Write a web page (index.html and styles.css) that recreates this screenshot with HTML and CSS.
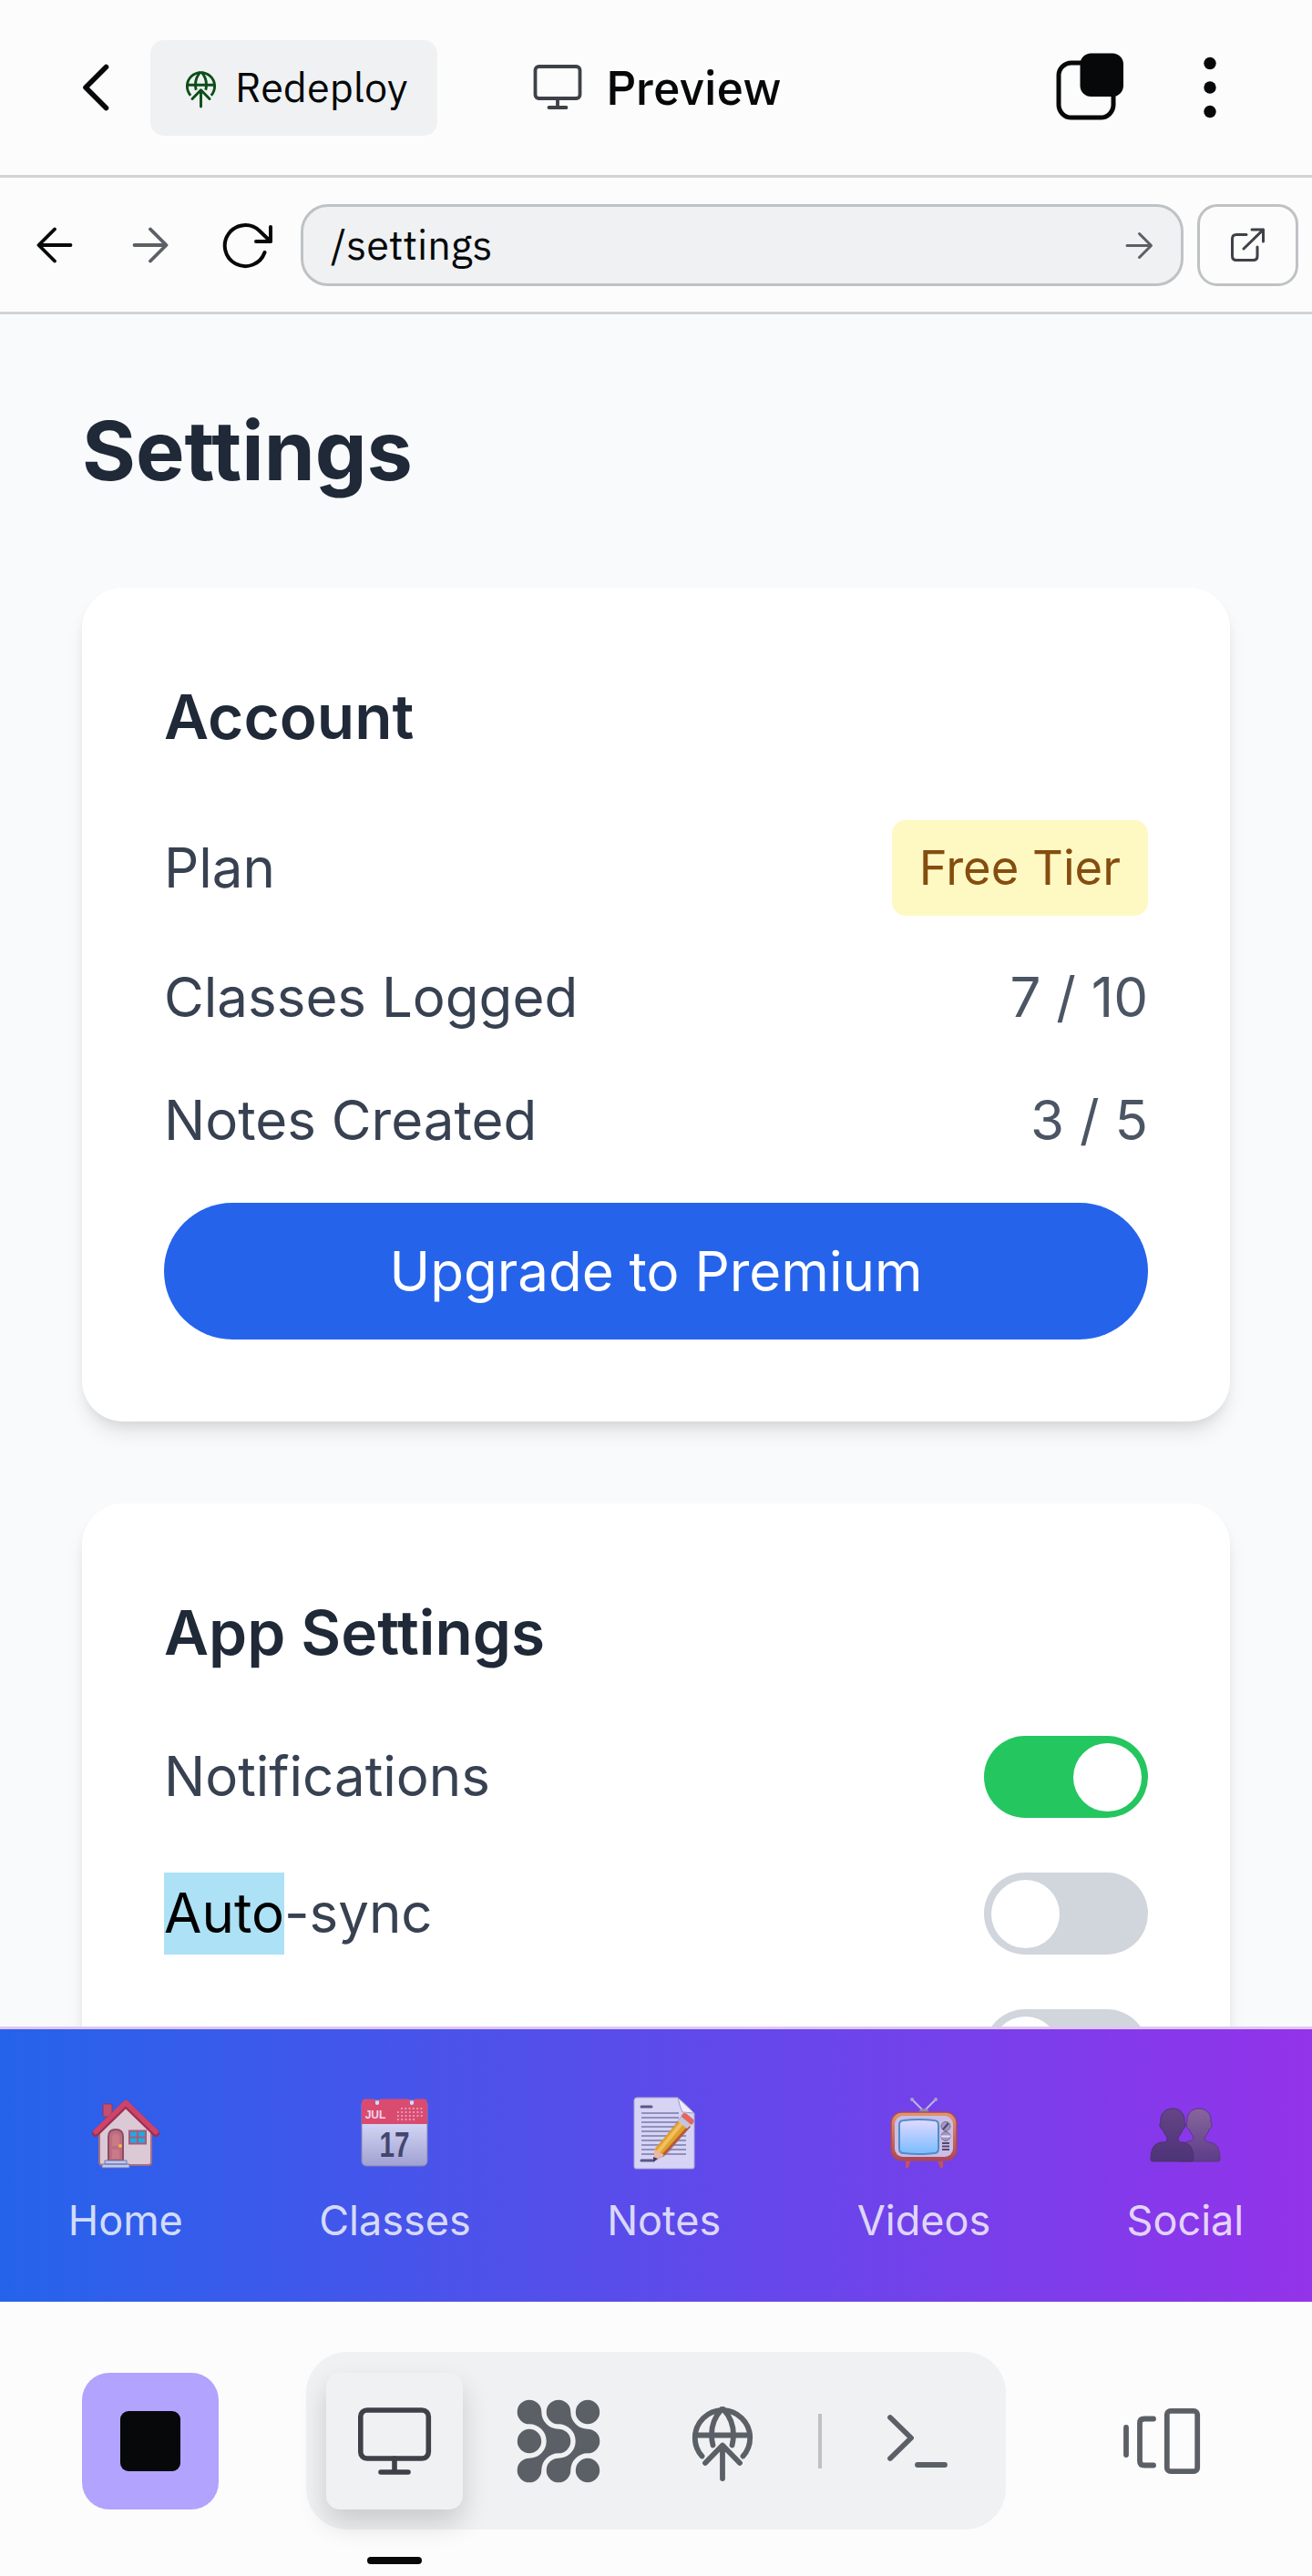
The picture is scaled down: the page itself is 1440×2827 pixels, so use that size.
FILE: index.html
```html
<!DOCTYPE html>
<html lang="en">
<head>
<meta charset="utf-8">
<title>Settings</title>
<link rel="stylesheet" href="styles.css">
</head>
<body>
<svg class="defs" width="0" height="0" aria-hidden="true">
  <symbol id="deploy" viewBox="0 0 90 90">
    <g fill="none" stroke="currentColor" stroke-width="5.8">
      <path d="M22.500 61.500A30.200 30.200 0 1 1 67.500 61.500"/>
      <path d="M15 38.500H75M44 10Q33 22 33 38 33 44 34.500 49.500M46 10Q57 22 57 38 57 44 55.500 49.500"/>
      <path d="M45 86V50M26 69 45 49.500 64 69" stroke-linecap="round" stroke-linejoin="round"/>
    </g>
  </symbol>
  <symbol id="monitor" viewBox="0 0 90 90">
    <g fill="none" stroke="currentColor" stroke-width="5.6" stroke-linecap="round">
      <rect x="7.800" y="11" width="74.500" height="53" rx="7"/>
      <path d="M45 64V79M30 79H60"/>
    </g>
  </symbol>
</svg>
<div class="app">
  <header class="topbar">
    <svg class="back" viewBox="0 0 75 90"><path d="M48.500 22.500 26 45 48.500 67.500"/></svg>
    <button class="redeploy"><svg class="redeploy-icon"><use href="#deploy"/></svg><span>Redeploy</span></button>
    <div class="preview"><svg class="preview-icon" viewBox="0 0 60 60"><rect x="5.500" y="7" width="49" height="35" rx="4"/><path d="M30 42V52M20.500 52H39.500"/></svg><span>Preview</span></div>
    <svg class="layers" viewBox="0 0 90 90"><rect x="11" y="18" width="60" height="60" rx="14"/><rect class="solid" x="34.500" y="7.500" width="47.500" height="47.500" rx="12"/></svg>
    <svg class="dots" viewBox="0 0 60 90"><circle cx="30" cy="18.500" r="6.700"/><circle cx="30" cy="45" r="6.700"/><circle cx="30" cy="71.500" r="6.700"/></svg>
  </header>
  <div class="addressbar">
    <svg class="nav-arrow" viewBox="0 0 60 60"><path d="M47.500 30H13M30 12.500 12.500 30 30 47.500"/></svg>
    <svg class="nav-arrow muted" viewBox="0 0 60 60"><path d="M12.500 30H47M30 12.500 47.500 30 30 47.500"/></svg>
    <svg class="reload" viewBox="0 0 75 75"><path d="M59.500 45A22.500 22.500 0 1 1 54 21.500L66 33M66 17V33H50"/></svg>
    <div class="url"><span>/settings</span><svg viewBox="0 0 45 45"><path d="M9 22.500H35M22.500 9.500 35.500 22.500 22.500 35.500"/></svg></div>
    <button class="external"><svg viewBox="0 0 45 45"><path d="M21 10.500H10Q5.500 10.500 5.500 15V34Q5.500 38.500 10 38.500H28.500Q33 38.500 33 34V24M18 26 39.500 5M27 5H39.500V18"/></svg></button>
  </div>
  <main class="page">
    <h1>Settings</h1>
    <section class="card account">
      <h2>Account</h2>
      <div class="row"><span class="label">Plan</span><span class="badge">Free Tier</span></div>
      <div class="row"><span class="label">Classes Logged</span><span class="label value">7 / 10</span></div>
      <div class="row"><span class="label">Notes Created</span><span class="label value">3 / 5</span></div>
      <button class="upgrade">Upgrade to Premium</button>
    </section>
    <section class="card app-settings">
      <h2>App Settings</h2>
      <div class="row"><span class="label">Notifications</span><span class="toggle on"></span></div>
      <div class="row"><span class="label"><mark>Auto</mark>-sync</span><span class="toggle"></span></div>
      <div class="row"><span></span><span class="toggle"></span></div>
    </section>
  </main>
  <nav class="tabs">
    <a class="tab">
      <svg viewBox="0 0 90 90">
        <path d="M20 14h10v14H20z" fill="#c54f70" stroke="#873b63"/>
        <path d="M45 14 73 43V78Q73 81 70 81H19Q16 81 16 78V43Z" fill="#dbc9d5" stroke="#a86e83" stroke-width="2"/>
        <path d="M12 46 45 14 78 46" fill="none" stroke="#9c2e56" stroke-width="8" stroke-linecap="round" stroke-linejoin="round"/>
        <path d="M12 44.500 45 12.500 78 44.500" fill="none" stroke="#cf4367" stroke-width="5.500" stroke-linecap="round" stroke-linejoin="round"/>
        <path d="M26 76V50Q26 42 34 42T42 50V76Z" fill="#bd6d80" stroke="#8c4c65" stroke-width="2"/>
        <path d="M30 60V51Q30 47 34 47T38 51V60ZM30 64H38V74H30Z" fill="#c97a87"/>
        <circle cx="39" cy="60" r="2" fill="#edba45"/>
        <rect x="49" y="43.500" width="18" height="14" fill="#20aae3" stroke="#a85a78" stroke-width="2"/>
        <path d="M58 43V57M49 50.500H67" stroke="#a85a78" stroke-width="2"/>
        <path d="M22 76H46V80H22ZM19 80H49V84H19Z" fill="#bdc7ef" stroke="#7176a6"/>
      </svg><span>Home</span>
    </a>
    <a class="tab">
      <svg viewBox="0 0 90 90">
        <defs><linearGradient id="cal" x1="0" y1="0" x2="0" y2="1"><stop offset=".3" stop-color="#d7daf7"/><stop offset="1" stop-color="#a0a1d2"/></linearGradient></defs>
        <rect x="9" y="10" width="72" height="72" rx="5" fill="url(#cal)" stroke="#8586b5"/>
        <path d="M9 36V13Q9 8.500 13 8.500H22Q24 8.500 24 11V14Q26 16 28 14V11Q28 8.500 30 8.500H60Q62 8.500 62 11V14Q64 16 66 14V11Q66 8.500 68 8.500H77Q81 8.500 81 13V36Z" fill="#d94c70"/>
        <path d="M52 19H76M48 23H76M48 27H76M48 31H68" stroke="#eeb8d2" stroke-width="1.600" stroke-dasharray="1.800 2.500"/>
        <text class="cal-month" x="24" y="30" text-anchor="middle">JUL</text>
        <text class="cal-day" x="45" y="72" text-anchor="middle" textLength="33" lengthAdjust="spacingAndGlyphs">17</text>
      </svg><span>Classes</span>
    </a>
    <a class="tab">
      <svg viewBox="0 0 90 90">
        <path d="M15 7H60L78 24V83Q78 85 76 85H14Q12 85 12 83V10Q12 7 15 7Z" fill="#d6d3f5" stroke="#a9a6d3"/>
        <path d="M60 7Q62 17 65 23L78 24Z" fill="#efeaff" stroke="#9998c1"/>
        <path d="M20 17H31M20 76H32" stroke="#57598b" stroke-width="3" stroke-linecap="round"/>
        <path d="M20 24H61M20 29H61M20 34H63M20 39H69M20 44H69M20 49H69M20 54H69M20 59H69M20 64H69M20 69H69" stroke="#797ba9" stroke-width="1.700"/>
        <path d="M34 77 37 63 65 25 77 32 50 68Z" fill="#61486d" opacity=".28"/>
        <path d="M34 76 34 64 62 31 73 38 44 71Z" fill="#e0a12e"/>
        <path d="M37 68 66 33" stroke="#f2bf61" stroke-width="4"/>
        <path d="M43 71 73 38" stroke="#b75938" stroke-width="3"/>
        <path d="M34 76V64L45 70Z" fill="#eab8aa"/><path d="M33 78V72L38 74Z" fill="#463d59"/>
        <path d="M60 33 64 28 75 36 70 41Z" fill="#c6c4dc"/>
        <path d="M64 28Q65 22 70 25L77 31Q79 33 75 37Z" fill="#e3675c"/>
      </svg><span>Notes</span>
    </a>
    <a class="tab">
      <svg viewBox="0 0 90 90">
        <defs><linearGradient id="tvcase" x1="0" y1="0" x2="0" y2="1"><stop stop-color="#e79569"/><stop offset="1" stop-color="#ae4655"/></linearGradient><linearGradient id="screen" x1="0" y1="0" x2="0" y2="1"><stop stop-color="#e2daff"/><stop offset="1" stop-color="#78bcff"/></linearGradient></defs>
        <path d="M32 9 45 22 58 9" fill="none" stroke="#beb6df" stroke-width="2"/>
        <circle cx="32" cy="9" r="2" fill="#a99fca"/><circle cx="58" cy="9" r="2" fill="#a99fca"/>
        <path d="M39 24Q40 19 45 19T51 24Z" fill="#8f87b6"/>
        <path d="M25 75H31L28 84H25ZM60 75H66L66 84H63Z" fill="#c55261"/>
        <rect x="9" y="23" width="72" height="53" rx="12" fill="url(#tvcase)" stroke="#a34b65" stroke-width="1.500"/>
        <rect x="13" y="27" width="64" height="45" rx="9" fill="#c9bfe7"/>
        <path d="M23 32Q39 30 56 32 61 32 61 37V63Q61 68 56 68 39 70 23 68 18 68 18 63V37Q18 32 23 32Z" fill="url(#screen)" stroke="#508cc8" stroke-width="2"/>
        <circle cx="69" cy="38.500" r="5" fill="#a19abe" stroke="#756b98"/><path d="M66 42 72 35" stroke="#4d476e" stroke-width="2"/>
        <circle cx="69" cy="49.500" r="5" fill="#a19abe" stroke="#756b98"/><path d="M64 49.500H74" stroke="#e7dfff" stroke-width="2"/>
        <path d="M65 57H73M65 60.500H73M65 64H73" stroke="#55466d" stroke-width="2"/>
      </svg><span>Videos</span>
    </a>
    <a class="tab">
      <svg viewBox="0 0 90 90">
        <defs><linearGradient id="p1" x1="0" y1="0" x2="0" y2="1"><stop stop-color="#654586"/><stop offset="1" stop-color="#4c3377"/></linearGradient><linearGradient id="p2" x1="0" y1="0" x2="0" y2="1"><stop stop-color="#87669d"/><stop offset="1" stop-color="#5d3c89"/></linearGradient></defs>
        <path d="M60 19C51 19 46 26 47 34 45 36 47 41 49 42 51 47 54 49 54 52 54 56 40 54 38 63Q36 69 37 75Q37 77 39 77H81Q83 77 83 75C83 61 79 57 71 56 67 55 66 54 66 51 68 48 70 46 71 42 74 41 75 36 73 34 74 26 69 19 60 19Z" fill="url(#p2)" stroke="#5a397c"/>
        <path d="M31 19C22 19 17 26 18 34 16 36 17 41 20 42 22 47 25 49 25 52 25 55 23 56 19 56 11 57 7 62 7 75Q7 77 9 77H52Q54 77 54 75C54 62 50 57 42 56 38 56 37 54 37 51 39 48 41 46 42 42 45 41 46 36 44 34 45 26 40 19 31 19Z" fill="url(#p1)" stroke="#4d326e"/>
      </svg><span>Social</span>
    </a>
  </nav>
  <footer class="toolbar">
    <button class="stop"><i></i></button>
    <div class="tools">
      <button class="tool active"><svg><use href="#monitor"/></svg></button>
      <button class="tool"><svg viewBox="-45 -45 90 90">
        <g fill="currentColor">
          <path id="chain" d="M-32-18.700A18.700 18.700 0 0 1-32 18.700A13.300 13.300 0 1 0-18.700 32A18.700 18.700 0 0 1 0 13.300A13.300 13.300 0 0 0 0-13.300A18.700 18.700 0 0 1-18.700-32A13.300 13.300 0 1 0-32-18.700Z"/>
          <use href="#chain" x="32"/>
          <circle cx="-32" cy="0" r="13.200"/><circle cx="32" cy="-32" r="13.200"/><circle cx="32" cy="32" r="13.200"/>
        </g></svg></button>
      <button class="tool"><svg class="deploy-icon"><use href="#deploy"/></svg></button>
      <span class="divider"></span>
      <button class="tool"><svg viewBox="0 0 90 90"><path d="M15 19 38 41.500 15 64M45 71H75"/></svg></button>
    </div>
    <svg class="devices" viewBox="0 0 90 90"><path d="M6 30V60M36 20.500H26Q21 20.500 21 25V67Q21 71.500 26 71.500H36"/><rect x="50.800" y="11.800" width="33.400" height="66.400" rx="4"/></svg>
  </footer>
</div>
</body>
</html>
```
FILE: styles.css
```css
* { box-sizing: border-box; }
body { margin: 0; font-family: Inter, "Liberation Sans", sans-serif; background: #fcfcfc; color: #060809; }
button { border: 0; padding: 0; font: inherit; color: inherit; background: none; }
svg { display: block; flex: none; overflow: visible; }
h1, h2 { margin: 0; color: #1f2937; font-variant-ligatures: none; }
.defs { position: absolute; }
.app { width: 1440px; height: 2827px; display: flex; flex-direction: column; overflow: hidden; }

.topbar { height: 195px; flex: none; border-bottom: 3px solid #d1d3d5; display: flex; align-items: center; padding-left: 68px; font-family: "IBM Plex Sans", Roboto, sans-serif; }
.topbar span, .url span { padding-bottom: 3px; }
.back { width: 75px; height: 90px; margin-right: 22px; }
.back path { fill: none; stroke: #060809; stroke-width: 5.6; stroke-linecap: round; stroke-linejoin: round; }
.redeploy { width: 315px; height: 105px; border-radius: 15px; background: #eff1f3; display: flex; align-items: center; padding-left: 33px; font-size: 45px; }
.redeploy-icon { width: 45px; height: 45px; margin-right: 15px; color: #0b4f16; }
.preview { width: 671px; display: flex; align-items: center; padding-left: 102px; font-size: 52.5px; font-weight: 500; }
.preview-icon { width: 60px; height: 60px; margin-right: 23px; fill: none; stroke: #3e4148; stroke-width: 3.8; stroke-linecap: round; }
.layers { width: 90px; height: 90px; margin-right: 57px; fill: none; stroke: #060809; stroke-width: 5; }
.layers .solid { fill: #060809; stroke: none; }
.dots { width: 60px; height: 90px; fill: #060809; }

.addressbar { height: 150px; flex: none; border-bottom: 3px solid #d1d3d5; display: flex; align-items: center; padding: 1px 15px 0 30px; font-family: "IBM Plex Sans", Roboto, sans-serif; }
.nav-arrow { width: 60px; height: 60px; margin-right: 45px; fill: none; stroke: #060809; stroke-width: 3.8; stroke-linecap: round; stroke-linejoin: round; }
.nav-arrow.muted { stroke: #5b5f66; margin-right: 36px; }
.reload { width: 75px; height: 75px; margin-right: 24px; fill: none; stroke: #060809; stroke-width: 4; stroke-linecap: round; stroke-linejoin: round; }
.url { width: 969px; height: 90px; border: 3px solid #bfc2c4; border-radius: 30px; background: #eff1f3; display: flex; align-items: center; justify-content: space-between; padding: 0 23px 0 30px; font-size: 45px; }
.url svg, .external svg { width: 45px; height: 45px; fill: none; stroke: #5b5f66; stroke-width: 3; stroke-linecap: round; stroke-linejoin: round; }
.external { width: 111px; height: 90px; margin-left: 15px; border: 3px solid #bfc2c4; border-radius: 22px; display: grid; place-items: center; }
.external svg { stroke: #3e4148; }

.page { flex: 1; min-height: 0; overflow: hidden; padding: 90px 90px 0; background: #f9fafc; }
.page h1 { font-size: 90px; line-height: 120px; font-weight: 700; margin-bottom: 90px; }
.card { padding: 90px; border-radius: 45px; background: #fff; box-shadow: 0 15px 22px -4px rgba(0,0,0,.1), 0 7px 15px -7px rgba(0,0,0,.1); margin-bottom: 90px; display: flex; flex-direction: column; }
.card h2 { height: 105px; font-size: 67.5px; line-height: 103px; font-weight: 600; }
.account { gap: 45px; }
.account h2 { margin-bottom: 15px; }
.app-settings { gap: 60px; }
.row { display: flex; align-items: center; justify-content: space-between; font-size: 60px; line-height: 90px; color: #374151; }
.label { height: 90px; line-height: 88px; }
.value { color: #4b5563; }
.badge { padding: 15px 30px; border-radius: 15px; background: #fef8c3; color: #854d0e; font-size: 52.5px; line-height: 75px; }
.upgrade { height: 150px; border-radius: 75px; background: #2563eb; color: #fff; font-size: 60px; padding-bottom: 1px; }
mark { display: inline-block; height: 90px; background: #ade1f5; color: #000; }
.toggle { width: 180px; height: 90px; padding: 7.5px; border-radius: 45px; background: #d1d5dc; display: flex; }
.toggle::before { content: ""; width: 75px; height: 75px; border-radius: 50%; background: #fff; }
.toggle.on { background: #24c65f; justify-content: flex-end; }

.tabs { height: 302px; flex: none; border-top: 3px solid #e0c5f4; background: linear-gradient(90deg, #2563eb, #9333ea) padding-box; display: flex; justify-content: space-around; padding-top: 68px; }
.tab { display: flex; flex-direction: column; align-items: center; gap: 22px; color: rgba(255,255,255,.8); font-size: 45px; line-height: 60px; }
.tab svg { width: 90px; height: 90px; }
.cal-month { font: 700 12px "Liberation Sans", sans-serif; fill: #f2d5ea; }
.cal-day { font: 700 38px "Liberation Sans", sans-serif; fill: #45466f; }

.toolbar { height: 301px; flex: none; display: flex; align-items: flex-start; padding: 55px 0 0 90px; color: #5b5f66; }
.stop { width: 150px; height: 150px; margin: 23px 96px 0 0; border-radius: 30px; background: #b2a3ff; display: grid; place-items: center; }
.stop i { width: 66px; height: 66px; border-radius: 9px; background: #060809; }
.tools { width: 768px; height: 195px; border-radius: 45px; background: #eff1f3; display: flex; align-items: center; gap: 30px; padding: 0 22px; }
.tool { width: 150px; height: 150px; border-radius: 15px; display: grid; place-items: center; }
.tool svg { width: 90px; height: 90px; fill: none; stroke: currentColor; stroke-width: 5.8; stroke-linecap: round; stroke-linejoin: round; }
.tool svg g { stroke: none; }
.active { position: relative; background: #eff1f3; color: #3e4148; box-shadow: 0 15px 30px rgba(0,0,0,.16); }
.active::after { content: ""; position: absolute; left: 45px; top: 202px; width: 60px; height: 8px; border-radius: 4px; background: #060809; }
.divider { width: 4px; height: 60px; background: #bfc1c3; }
.devices { width: 90px; height: 90px; margin: 53px 0 0 126px; fill: none; stroke: #5b5f66; stroke-width: 5.8; stroke-linecap: round; }
```
